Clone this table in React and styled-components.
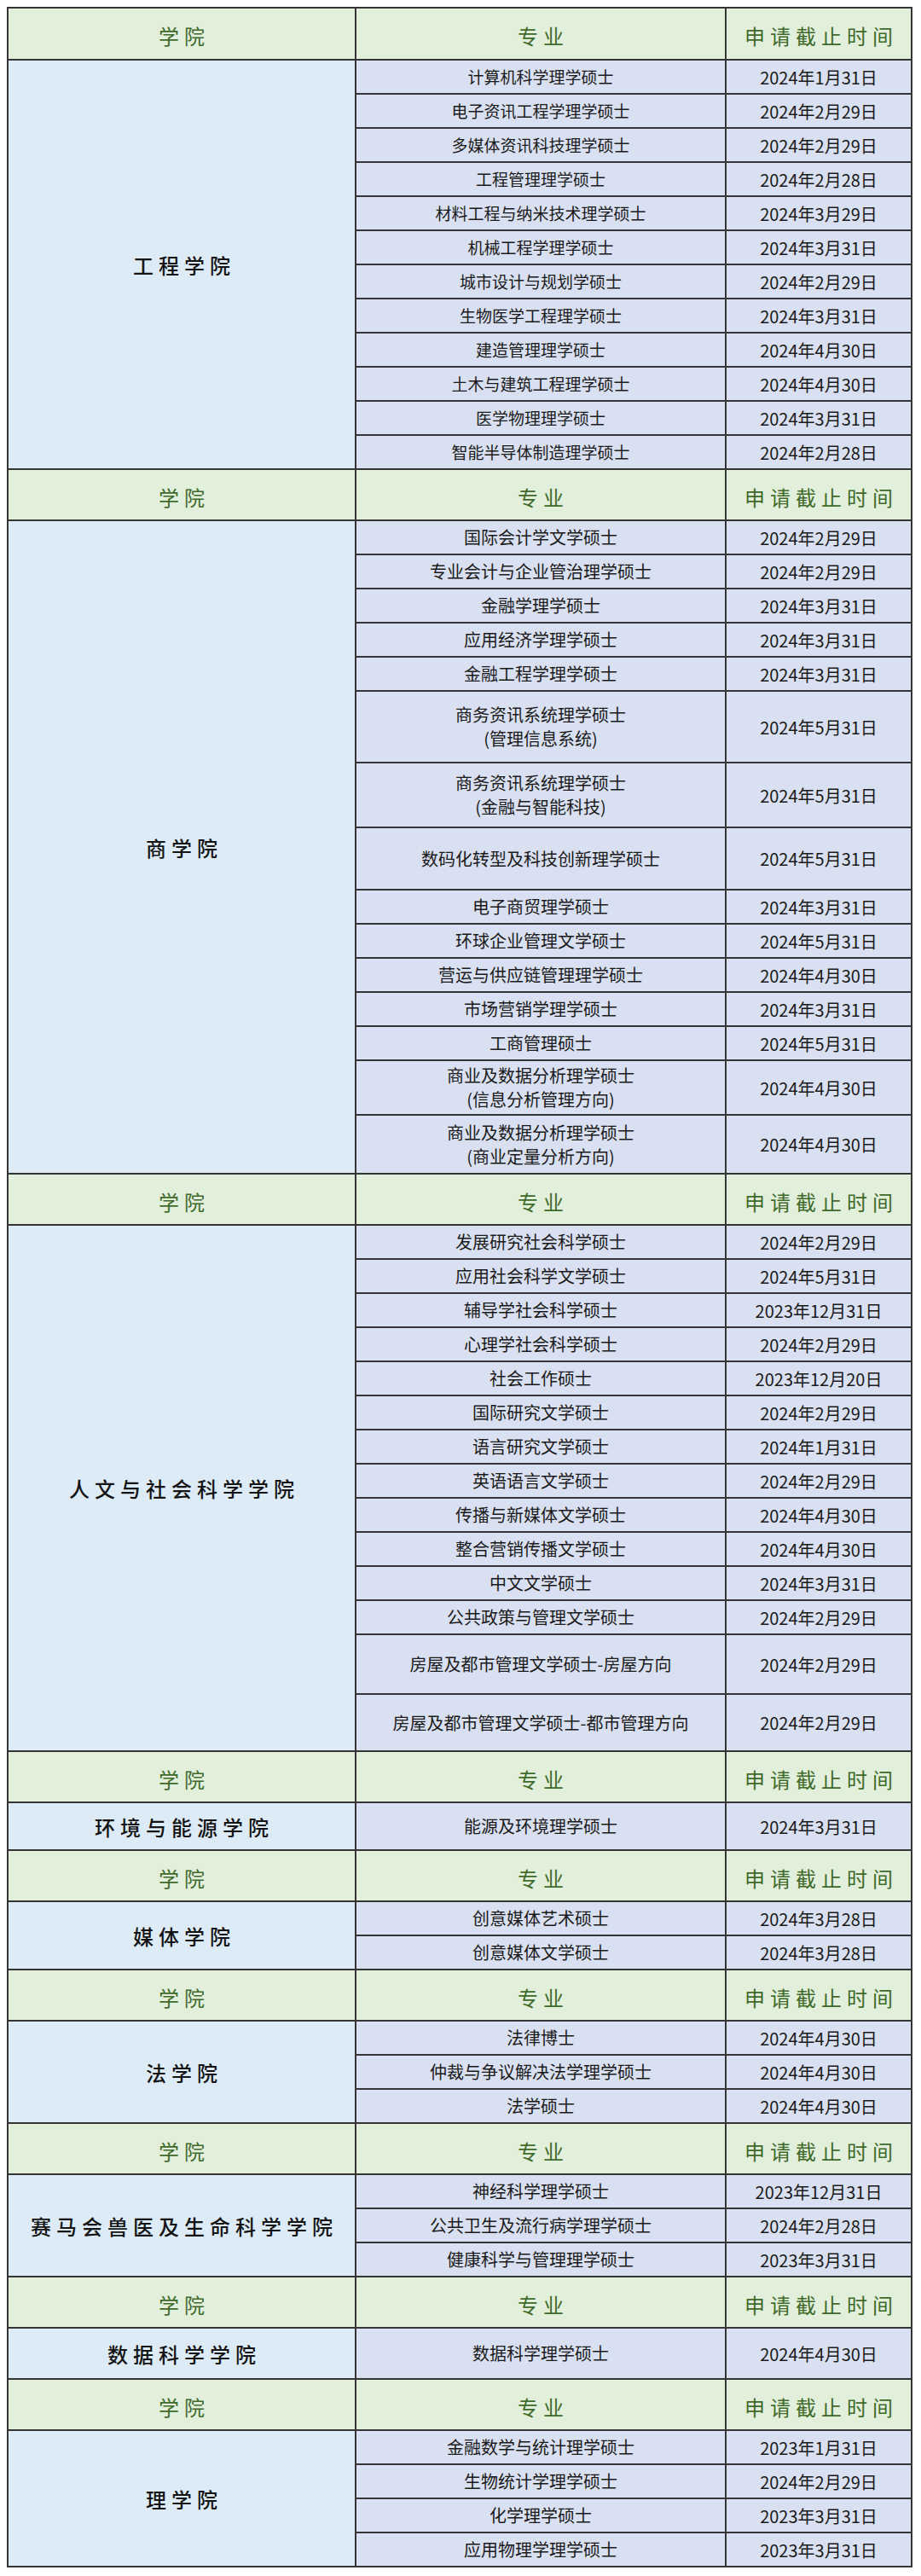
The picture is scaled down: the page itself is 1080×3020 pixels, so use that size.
import React from 'react'
import styled, { createGlobalStyle } from 'styled-components'

const GlobalStyle = createGlobalStyle`
  body {
    margin: 0;
    background: #ffffff;
    font-family: "Noto Sans CJK SC", "Noto Sans", sans-serif;
  }
`

const Page = styled.div`
  padding: 8px 10px 10px 8px;
`

const Grid = styled.div`
  display: grid;
  grid-template-columns: 406px 432px 216px;
  gap: 2px;
  width: 1058px;
  border: 2px solid #353535;
  background: #353535;
`

const HeadCell = styled.div`
  height: ${p => p.$h || 58}px;
  display: flex;
  align-items: center;
  justify-content: center;
  padding: 4px 0 0 6px;
  box-sizing: border-box;
  background: #e2efda;
  color: #3f6a2c;
  font-size: 24px;
  letter-spacing: 6px;
`

const CollegeCell = styled.div`
  grid-column: 1;
  grid-row: span ${p => p.$span};
  display: flex;
  align-items: center;
  justify-content: center;
  padding-left: 6px;
  background: #ddebf7;
  color: #141414;
  font-size: 24px;
  font-weight: 500;
  letter-spacing: 6px;
`

const MajorCell = styled.div`
  height: ${p => p.$h}px;
  display: flex;
  flex-direction: column;
  align-items: center;
  justify-content: center;
  background: #d9e0f1;
  color: #1a1a1a;
  font-size: ${p => p.$size}px;
  line-height: 1.4;
  text-align: center;
`

const DateCell = styled.div`
  height: ${p => p.$h}px;
  display: flex;
  align-items: center;
  justify-content: center;
  background: #d9e0f1;
  color: #1a1a1a;
  font-size: 20px;
`

const sections = [
  {
    name: '工程学院',
    size: 19,
    first: true,
    rows: [
      ['计算机科学理学硕士', '2024年1月31日'],
      ['电子资讯工程学理学硕士', '2024年2月29日'],
      ['多媒体资讯科技理学硕士', '2024年2月29日'],
      ['工程管理理学硕士', '2024年2月28日'],
      ['材料工程与纳米技术理学硕士', '2024年3月29日'],
      ['机械工程学理学硕士', '2024年3月31日'],
      ['城市设计与规划学硕士', '2024年2月29日'],
      ['生物医学工程理学硕士', '2024年3月31日'],
      ['建造管理理学硕士', '2024年4月30日'],
      ['土木与建筑工程理学硕士', '2024年4月30日'],
      ['医学物理理学硕士', '2024年3月31日'],
      ['智能半导体制造理学硕士', '2024年2月28日'],
    ],
  },
  {
    name: '商学院',
    rows: [
      ['国际会计学文学硕士', '2024年2月29日'],
      ['专业会计与企业管治理学硕士', '2024年2月29日'],
      ['金融学理学硕士', '2024年3月31日'],
      ['应用经济学理学硕士', '2024年3月31日'],
      ['金融工程学理学硕士', '2024年3月31日'],
      [['商务资讯系统理学硕士', '(管理信息系统)'], '2024年5月31日', 82],
      [['商务资讯系统理学硕士', '(金融与智能科技)'], '2024年5月31日', 74],
      ['数码化转型及科技创新理学硕士', '2024年5月31日', 71],
      ['电子商贸理学硕士', '2024年3月31日'],
      ['环球企业管理文学硕士', '2024年5月31日'],
      ['营运与供应链管理理学硕士', '2024年4月30日'],
      ['市场营销学理学硕士', '2024年3月31日'],
      ['工商管理硕士', '2024年5月31日'],
      [['商业及数据分析理学硕士', '(信息分析管理方向)'], '2024年4月30日', 62],
      [['商业及数据分析理学硕士', '(商业定量分析方向)'], '2024年4月30日', 67],
    ],
  },
  {
    name: '人文与社会科学学院',
    rows: [
      ['发展研究社会科学硕士', '2024年2月29日'],
      ['应用社会科学文学硕士', '2024年5月31日'],
      ['辅导学社会科学硕士', '2023年12月31日'],
      ['心理学社会科学硕士', '2024年2月29日'],
      ['社会工作硕士', '2023年12月20日'],
      ['国际研究文学硕士', '2024年2月29日'],
      ['语言研究文学硕士', '2024年1月31日'],
      ['英语语言文学硕士', '2024年2月29日'],
      ['传播与新媒体文学硕士', '2024年4月30日'],
      ['整合营销传播文学硕士', '2024年4月30日'],
      ['中文文学硕士', '2024年3月31日'],
      ['公共政策与管理文学硕士', '2024年2月29日'],
      ['房屋及都市管理文学硕士-房屋方向', '2024年2月29日', 68],
      ['房屋及都市管理文学硕士-都市管理方向', '2024年2月29日', 65],
    ],
  },
  {
    name: '环境与能源学院',
    rows: [['能源及环境理学硕士', '2024年3月31日', 54]],
  },
  {
    name: '媒体学院',
    rows: [
      ['创意媒体艺术硕士', '2024年3月28日'],
      ['创意媒体文学硕士', '2024年3月28日'],
    ],
  },
  {
    name: '法学院',
    rows: [
      ['法律博士', '2024年4月30日'],
      ['仲裁与争议解决法学理学硕士', '2024年4月30日'],
      ['法学硕士', '2024年4月30日'],
    ],
  },
  {
    name: '赛马会兽医及生命科学学院',
    rows: [
      ['神经科学理学硕士', '2023年12月31日'],
      ['公共卫生及流行病学理学硕士', '2024年2月28日'],
      ['健康科学与管理理学硕士', '2023年3月31日'],
    ],
  },
  {
    name: '数据科学学院',
    rows: [['数据科学理学硕士', '2024年4月30日', 58]],
  },
  {
    name: '理学院',
    rows: [
      ['金融数学与统计理学硕士', '2023年1月31日'],
      ['生物统计学理学硕士', '2024年2月29日'],
      ['化学理学硕士', '2023年3月31日'],
      ['应用物理学理学硕士', '2023年3月31日'],
    ],
  },
]

const App = () => (
  <Page>
    <GlobalStyle />
    <Grid>
      {sections.map(sec => (
        <React.Fragment key={sec.name}>
          <HeadCell $h={sec.first ? 59 : 58}>学院</HeadCell>
          <HeadCell $h={sec.first ? 59 : 58}>专业</HeadCell>
          <HeadCell $h={sec.first ? 59 : 58}>申请截止时间</HeadCell>
          <CollegeCell $span={sec.rows.length}>{sec.name}</CollegeCell>
          {sec.rows.map(([major, date, h = 38], i) => (
            <React.Fragment key={i}>
              <MajorCell $h={h} $size={sec.size || 20}>
                {Array.isArray(major)
                  ? major.map(line => <span key={line}>{line}</span>)
                  : major}
              </MajorCell>
              <DateCell $h={h}>{date}</DateCell>
            </React.Fragment>
          ))}
        </React.Fragment>
      ))}
    </Grid>
  </Page>
)

export default App
